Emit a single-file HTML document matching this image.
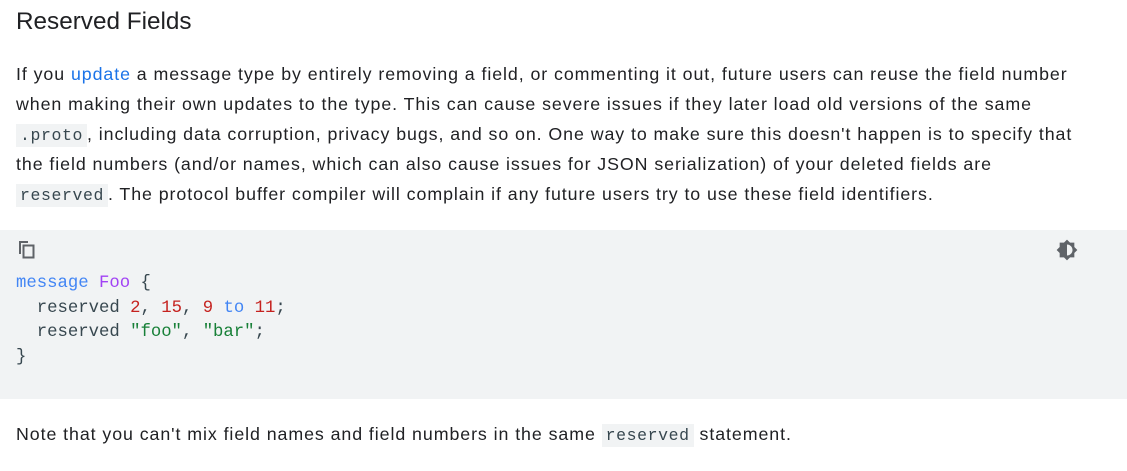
<!DOCTYPE html>
<html><head><style>
body{margin:0;background:#fff;font-family:"Liberation Sans",sans-serif;color:#202124;width:1127px;height:471px;overflow:hidden;position:relative}
h2{position:absolute;left:16px;top:6px;margin:0;font-weight:400;font-size:24.3px;line-height:32px;color:#202124}
p{position:absolute;left:16px;margin:0;font-size:17.8px;line-height:29.8px;white-space:nowrap;letter-spacing:0.93px}
a{color:#1a73e8;text-decoration:none}
code{font-family:"Liberation Mono",monospace;font-size:16.5px;letter-spacing:0.6px;background:#f1f3f4;color:#37474f;padding:2px 4px}
.pre{position:absolute;left:0;top:230px;width:1127px;height:169px;background:#f1f3f4}
.code{position:absolute;left:16px;top:42px;margin:0;font-family:"Liberation Mono",monospace;font-size:17.3px;line-height:24.7px;color:#37474f;white-space:pre}
.k{color:#4285f4}.t{color:#a142f4}.n{color:#c5221f}.s{color:#188038}
</style></head><body>
<h2>Reserved Fields</h2>
<p style="top:60px">If you <a>update</a> a message type by entirely removing a field, or commenting it out, future users can reuse the field number<br>when making their own updates to the type. This can cause severe issues if they later load old versions of the same<br><code>.proto</code>, including data corruption, privacy bugs, and so on. One way to make sure this doesn't happen is to specify that<br>the field numbers (and/or names, which can also cause issues for JSON serialization) of your deleted fields are<br><code>reserved</code>. The protocol buffer compiler will complain if any future users try to use these field identifiers.</p>
<div class="pre">
<svg style="position:absolute;left:17px;top:9px" width="20" height="20" viewBox="0 0 20 20"><path d="M2 2h9v2H4v11H2z" fill="#5f6368"/><rect x="6.5" y="6.5" width="10" height="12" fill="none" stroke="#5f6368" stroke-width="2"/></svg>
<svg style="position:absolute;left:1056px;top:9px" width="22" height="22" viewBox="0 0 24 24"><path fill="#5f6368" d="M20 8.69V4h-4.69L12 .69 8.69 4H4v4.69L.69 12 4 15.31V20h4.69L12 23.31 15.31 20H20v-4.69L23.31 12 20 8.69zM12 18V6c3.31 0 6 2.69 6 6s-2.69 6-6 6z"/></svg>
<div class="code"><span class="k">message</span> <span class="t">Foo</span> {
  reserved <span class="n">2</span>, <span class="n">15</span>, <span class="n">9</span> <span class="k">to</span> <span class="n">11</span>;
  reserved <span class="s">"foo"</span>, <span class="s">"bar"</span>;
}</div>
</div>
<p style="top:420px">Note that you can't mix field names and field numbers in the same <code>reserved</code> statement.</p>
</body></html>
